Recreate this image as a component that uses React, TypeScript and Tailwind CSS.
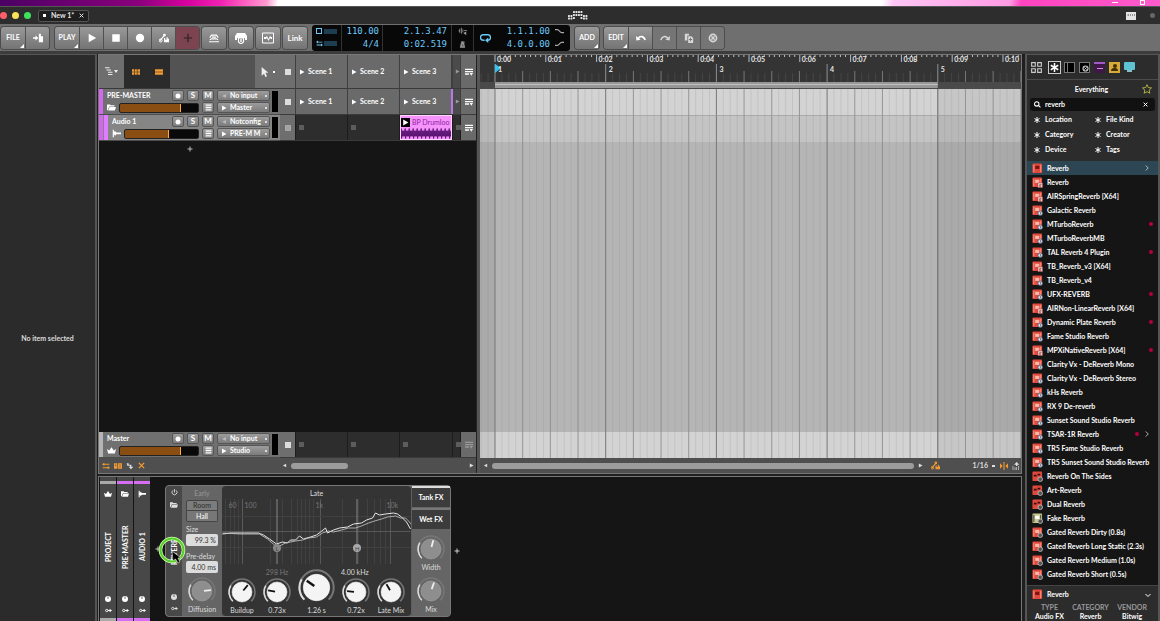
import type { ReactNode } from 'react';
import clsx from 'clsx';

const paths: Record<string, ReactNode> = {
  play: <path d="M2 1l9 5-9 5z" />,
  record: <circle cx="6" cy="6" r="5" />,
  stop: <path d="M1.500 1.500h9v9h-9z" />,
  left: <path d="M10 2v8L2 6z" />,
  right: <path d="M2 1v10l9-5z" />,
  toFile: (
    <>
      <path d="M0 5h3V3l3.500 3L3 9V7H0z" />
      <path d="M7 1h2.500v3H12v7H7z" />
    </>
  ),
  automation: (
    <>
      <path d="M1 9.500l5-6" fill="none" stroke="currentColor" strokeWidth="1.400" />
      <circle cx="6.500" cy="2.500" r="1.700" />
      <circle cx="2" cy="9" r="1.800" fill="none" stroke="currentColor" strokeWidth="1.200" />
      <path d="M6 6h1.500v2H9V5h1.500v2H12v4H6z" />
    </>
  ),
  plus: <path d="M5 1h2v4h4v2H7v4H5V7H1V5h4z" />,
  thinPlus: <path d="M5 1h2v4h4v2H7v4H5V7H1V5h4z" />,
  layers: (
    <path d="M0 10.500h12M1 8l2-1h6l2 1M1 5.500l2-3h6l2 3M3.500 5h5" fill="none" stroke="currentColor" strokeWidth="1.400" />
  ),
  groove: (
    <>
      <path d="M2 1h8l2 3v4h-2V6H2v2H0V4z" />
      <path d="M3.500 6h5v4L6 12 3.500 10z" fill="none" stroke="currentColor" strokeWidth="1.200" />
      <path d="M5.300 7h1.400v3H5.300z" />
    </>
  ),
  wave: (
    <>
      <path d="M.5 1h11v10H.5z" fill="none" stroke="currentColor" />
      <path d="M2 5h2l1-1 1.500 3L8 4l1 1h1v2H9L8 6 6.500 9 5 6 4 7H2z" />
    </>
  ),
  undo: (
    <>
      <path d="M2.500 6.500C5 3 9.500 3.500 11 8.500" fill="none" stroke="currentColor" strokeWidth="2" />
      <path d="M0 3.500L.5 9l5-1z" />
    </>
  ),
  redo: (
    <>
      <path d="M9.500 6.500C7 3 2.500 3.500 1 8.500" fill="none" stroke="currentColor" strokeWidth="1.700" />
      <path d="M12 3.500L11.500 9l-5-1z" />
    </>
  ),
  copy: (
    <>
      <path d="M1 1h5v2H4v6H1z" />
      <path fillRule="evenodd" d="M5 4h4l2 2v6H5zM7.300 5.800v1.500H6v1h1.300v1.500h1V8.300h1.400v-1H8.300V5.800z" />
    </>
  ),
  cancel: (
    <>
      <circle cx="6" cy="6" r="4.300" fill="none" stroke="currentColor" strokeWidth="2" />
      <path d="M4 4l4 4M8 4L4 8" stroke="currentColor" strokeWidth="1.600" />
    </>
  ),
  close: <path d="M1.500 1.500l9 9M10.500 1.500l-9 9" fill="none" stroke="currentColor" strokeWidth="2.400" />,
  folder: <path d="M0 2h4l1 1h5v1.500H3L1 9.500H0zM3.500 5.300H12L10.500 10h-9z" />,
  crown: <path d="M0 4l3 2 3-4.500L9 6l3-2-1.500 6h-9z" />,
  track: <path d="M1 1h1.500v3L4 2.500l2 2h6v2.500H6l-2 2-1.500-2V11H1z" />,
  menu: <path d="M1 1h10v2.200H1zM1 4.900h10v2.200H1zM1 8.800h10V11H1z" />,
  clipList: <path d="M0 1h12v2H0zM0 4.500h12v2H0zM0 8h6v2H0zM7 7.500h5L9.500 11.500z" />,
  tree: <path d="M0 1h6M2 4h6M4 7h6M4 10h6" fill="none" stroke="currentColor" strokeWidth="1.300" />,
  grid: <path fillRule="evenodd" d="M0 2h12v8H0zM3.300 2v8h1V2zM7.300 2v8h1V2zM0 5.500h12v1H0z" />,
  rows: <path d="M0 2h12v3.500H0zM0 6.500h12V10H0z" />,
  pointer: <path d="M2 0l8 7H6.500L8.500 11l-2 1-1.700-4L2 10.500z" />,
  loop: (
    <>
      <path d="M5 9H3.500a3 3 0 010-6h5a3 3 0 010 6H8" fill="none" stroke="currentColor" strokeWidth="1.500" />
      <path d="M9 6v6L5.500 9z" />
    </>
  ),
  swap: <path d="M0 3.500L3.500 1v1.800H11v1.500H3.500V6zM12 8.500L8.500 6v1.800H1v1.500h7.500V11z" />,
  boxes: <path fillRule="evenodd" d="M0 2h5v8H0zM1.500 4v1.500h2V4zM6 2h6v8H6zM7 4h4v1H7zM7 7h4v1H7z" />,
  hook: <path d="M1 2h3v2h4v3h3L7.500 11 4 7h2V5.500H2z" />,
  metronome: (
    <path fillRule="evenodd" d="M4.500 1h3L10 11H2zM6 4L4.500 9h4zM10 1L6 8" stroke="currentColor" />
  ),
  shuffle: <path d="M1 4h1V2h1v6H2V6H1zM4 1h1v8H4zM6 3h1v4H6zM8 4h4v1H8zM7 8l4-2v5z" />,
  curveDown: <path d="M0 3.500h3c3 0 3 4 6 4h3" fill="none" stroke="currentColor" strokeWidth="1.500" />,
  curveUp: <path d="M0 8.500h3c3 0 3-4 6-4h3" fill="none" stroke="currentColor" strokeWidth="1.500" />,
  power: <path d="M6 0v6M3 2.500a4.300 4.300 0 106 0" fill="none" stroke="currentColor" strokeWidth="1.500" />,
  miniKnob: <path fillRule="evenodd" d="M6 0a6 6 0 100 12A6 6 0 006 0zM5.200 1h1.600v5H5.200z" />,
  link: (
    <>
      <circle cx="3" cy="6" r="2" fill="none" stroke="currentColor" strokeWidth="1.600" />
      <path d="M5 5.200h3V3l4 3-4 3V6.800H5z" />
    </>
  ),
  asterisk: <path d="M6 0v12M1 3l10 6M11 3L1 9" fill="none" stroke="currentColor" strokeWidth="2" />,
  search: (
    <path d="M8 8l3 3M8.500 5a3.800 3.800 0 11-7.600 0 3.800 3.800 0 017.600 0z" fill="none" stroke="currentColor" strokeWidth="1.800" />
  ),
  star: (
    <path d="M6 .8l1.600 3.500 3.800.4-2.800 2.600.8 3.800L6 9.200l-3.400 1.900.8-3.800L.6 4.700l3.800-.4z" fill="none" stroke="currentColor" strokeWidth="1" />
  ),
  chevron: <path d="M3.500 1l5 5-5 5" fill="none" stroke="currentColor" strokeWidth="1.700" />,
  down: <path d="M1 4l5 5 5-5" fill="none" stroke="currentColor" strokeWidth="2" />,
  snap: <path d="M0 2l4 4-4 4zM12 2v8L8 6zM5.200 0h1.600v12H5.200z" />,
  arrowBars: <path d="M7 0l4 4H8v2H6V4H3zM1 6h1v6H1zM4 8h1v4H4zM6 8h1v4H6zM9 6h1v6H9z" />,
  tiles: (
    <path d="M.7.700h4v4h-4zM7.300.700h4v4h-4zM.7 7.300h4v4h-4zM7.300 7.300h4v4h-4z" fill="none" stroke="currentColor" strokeWidth="1.200" />
  ),
};

function Icon({ name, className = 'size-2' }: { name: string; className?: string }) {
  return (
    <svg viewBox="0 0 12 12" fill="currentColor" aria-hidden="true" className={clsx('shrink-0', className)}>
      {paths[name]}
    </svg>
  );
}

const toolGroups: { label: string; icon?: string; tone?: string; corner?: boolean }[][] = [
  [{ label: 'FILE', corner: true }, { label: 'Save to file', icon: 'toFile' }],
  [
    { label: 'PLAY', corner: true },
    { label: 'Play', icon: 'play' },
    { label: 'Stop', icon: 'stop' },
    { label: 'Record', icon: 'record' },
    { label: 'Automation', icon: 'automation' },
    { label: 'Overdub', icon: 'plus', tone: 'red' },
  ],
  [{ label: 'Layers', icon: 'layers' }],
  [{ label: 'Groove', icon: 'groove' }],
  [{ label: 'Fill', icon: 'wave' }],
  [{ label: 'Link' }],
];

const editGroups: typeof toolGroups = [
  [{ label: 'ADD', corner: true }],
  [
    { label: 'EDIT', corner: true },
    { label: 'Undo', icon: 'undo' },
    { label: 'Redo', icon: 'redo', tone: 'flat' },
    { label: 'Duplicate', icon: 'copy', tone: 'flat' },
    { label: 'Delete', icon: 'cancel', tone: 'flat' },
  ],
];

function ToolGroup({ items }: { items: (typeof toolGroups)[number] }) {
  return (
    <div className="flex h-[22px] overflow-hidden rounded-[3px] ring-1 ring-[#4c4c4c]">
      {items.map((item, i) => (
        <button
          key={item.label}
          aria-label={item.label}
          className={clsx(
            'relative flex w-[24px] items-center justify-center',
            item.label === 'Link' ? 'text-[8px]' : 'text-[7px]',
            i > 0 && 'border-l border-[#505050]',
            item.tone === 'red' && 'bg-[#7c4450] text-[#402a2e]',
            item.tone === 'flat' && 'bg-[#757575] text-[#d8d8d8]',
            !item.tone && 'bg-linear-to-b from-[#999] to-[#747474] text-white'
          )}
        >
          {item.icon ? (
            <Icon name={item.icon} className={item.icon === 'wave' || item.icon === 'groove' ? 'size-3' : 'size-[10px]'} />
          ) : (
            item.label
          )}
          {item.corner && <span className="absolute right-px bottom-px border-b-4 border-l-4 border-b-white border-l-transparent" />}
        </button>
      ))}
    </div>
  );
}

function TitleBar() {
  return (
    <>
      <div className="flex h-[6px] items-start justify-end gap-[22px] bg-[linear-gradient(100deg,#4b0064_0%,#8b007c_12%,#d6009d_16%,#ef20b0_19%,#ff5cc0_21%,#ff9ad0_23%,#fff_24%,#fff_76%,#ffc6f4_77%,#ff9be4_87%,#ff43bf_88%,#ff5ccc_100%)] pr-[15px]">
        <span className="mt-[2px] h-px w-[6px] bg-white" />
        <span className="size-[5px] border border-white" />
      </div>
      <header className="flex h-[18px] items-center border-t border-[#555] bg-[#2d2d2d] pr-[5px]">
        <div className="flex flex-1 items-center">
          <div className="flex gap-[5px]">
            <span className="size-[7px] rounded-full bg-[#ff5f69]" />
            <span className="size-[7px] rounded-full bg-[#f9e158]" />
            <span className="size-[7px] rounded-full bg-[#3fe25b]" />
          </div>
          <div className="ml-[7px] flex h-[12px] items-center gap-[5px] rounded-[2px] border border-[#555] bg-[#1e1e1e] px-1 text-[7px] text-[#e5e5e5]">
            <span className="size-[3px] bg-white" />
            <span className="whitespace-nowrap">New 1*</span>
            <button aria-label="Close project">
              <Icon name="close" className="size-[5px]" />
            </button>
          </div>
        </div>
        <svg viewBox="0 0 20 10" className="h-[10px] w-[20px]" fill="#e8e8e8" aria-hidden="true">
          {[
            [0, 4], [0, 6.5], [2.5, 4], [2.5, 6.5], [5, 0], [5, 3], [5, 6], [7.5, 0], [7.5, 3], [10, 0], [10, 3],
            [12.5, 0], [12.5, 3], [12.5, 6], [15, 4], [15, 6.5], [17.5, 4], [17.5, 6.5],
          ].map(([x, y]) => (
            <rect key={`${x}-${y}`} x={x} y={y} width="1.900" height="1.900" rx="0.500" />
          ))}
        </svg>
        <div className="flex flex-1 items-center justify-end">
          <svg viewBox="0 0 10 8" className="h-2 w-[10px]" aria-hidden="true">
            <path d="M0 0h10v8H0z" fill="#e4e4e4" />
            <path d="M1.500 3h1.500M4 3h1M6 3h1M8 3h1" stroke="#444" />
          </svg>
          <span className="ml-[14px] size-[5px] rounded-full bg-[#666]" />
        </div>
      </header>
    </>
  );
}

function Transport() {
  return (
    <div className="flex h-[30px] items-center border-b-3 border-[#3c3c3c] bg-[#6f6f6f] pl-px">
      <div className="flex gap-[3px]">
        {toolGroups.map((group, i) => (
          <div key={i} className={i === 1 ? 'ml-[3px]' : undefined}>
            <ToolGroup items={group} />
          </div>
        ))}
      </div>
      <div className="ml-[5px] flex h-[26px] rounded-[3px] bg-[#080808] font-['DejaVu_Sans_Mono',monospace] text-[9px]/[13px] font-normal text-[#6cc8f8]">
        <div className="flex w-[30px] flex-col justify-around border-r border-[#333] px-1 py-px">
          <div className="flex items-center justify-between">
            <span className="size-[6px] border border-[#6cc8f8]" />
            <span className="h-[5px] w-[13px] bg-[#1c3e50]" />
          </div>
          <div className="flex items-center justify-between">
            <Icon name="swap" className="size-[7px]" />
            <span className="h-[5px] w-[13px] bg-[#1c3e50]" />
          </div>
        </div>
        <div className="w-[41px] border-r border-[#333] pr-[3px] text-right">
          <div>110.00</div>
          <div>4/4</div>
        </div>
        <div className="w-[69px] border-r border-[#333] pr-1 text-right">
          <div>2.1.3.47</div>
          <div>0:02.519</div>
        </div>
        <div className="flex w-[22px] flex-col items-center justify-around border-r border-[#333] text-[#999]">
          <Icon name="shuffle" className="size-[9px]" />
          <Icon name="metronome" className="size-[7px]" />
        </div>
        <div className="flex w-[96px] items-center pl-[6px]">
          <Icon name="loop" className="size-[11px]" />
          <div className="ml-auto text-right">
            <div>1.1.1.00</div>
            <div>4.0.0.00</div>
          </div>
          <div className="mr-[6px] ml-[5px] flex flex-col gap-[3px] text-[#aaa]">
            <Icon name="curveDown" className="size-[9px]" />
            <Icon name="curveUp" className="size-[9px]" />
          </div>
        </div>
      </div>
      <div className="ml-[5px] flex gap-[5px]">
        {editGroups.map((group, i) => (
          <ToolGroup key={i} items={group} />
        ))}
      </div>
    </div>
  );
}

const chip = 'flex h-[11px] items-center justify-center rounded-[2px] border border-[#555] bg-linear-to-b from-[#9c9c9c] to-[#7c7c7c] text-white';

function Route({ track, kind, value }: { track: string; kind: 'input' | 'output'; value: string }) {
  return (
    <div className={clsx(chip, 'w-[53px]')}>
      <Icon name={kind === 'input' ? 'left' : 'right'} className={clsx('mx-[3px] size-[6px]', kind === 'input' && 'opacity-40')} />
      <select
        aria-label={`${track} ${kind}`}
        className="h-[9px] min-w-0 flex-1 appearance-none overflow-hidden bg-transparent text-[7px]/[9px] font-bold"
      >
        <option>{value}</option>
      </select>
      <span className="mr-[2px] size-[2px] bg-[#ddd]" />
    </div>
  );
}

interface TrackProps {
  name: string;
  icon: string;
  input: string;
  output: string;
  volume: number;
  nested?: boolean;
  master?: boolean;
}

function TrackHeader({ name, icon, input, output, volume, nested, master }: TrackProps) {
  return (
    <div className={clsx('flex h-[26px] w-[181px] border-b border-[#4d4d4d]', nested ? 'bg-[#858585]' : 'bg-[#707070]')}>
      <span className={clsx('w-[4px]', master ? 'bg-[#b5b5b5]' : 'bg-[#d268ee]')} />
      {nested && <span className="ml-px w-[4px] bg-[#e07cff]" />}
      <div className="flex min-w-0 flex-1 flex-col justify-between py-px pl-1">
        <div className="flex items-center text-[7px]/[11px] text-white">
          <span className="flex-1 whitespace-nowrap">{name}</span>
          <div className="flex gap-[3px] text-[8px]">
            <button aria-label={`${name} record arm`} className={clsx(chip, 'w-[12px]')}>
              <Icon name="record" className="size-[6px]" />
            </button>
            <button aria-label={`${name} solo`} className={clsx(chip, 'w-[12px]')}>S</button>
            <button aria-label={`${name} mute`} className={clsx(chip, 'w-[12px]')}>M</button>
            <Route track={name} kind="input" value={input} />
          </div>
        </div>
        <div className="flex items-center gap-[3px] text-white">
          <Icon name={icon} className="size-[9px]" />
          <input
            type="range"
            aria-label={`${name} volume`}
            defaultValue={volume}
            className="h-[10px] min-w-0 flex-1 appearance-none rounded-[2px] border border-[#222] [&::-webkit-slider-thumb]:h-[8px] [&::-webkit-slider-thumb]:w-px [&::-webkit-slider-thumb]:appearance-none [&::-webkit-slider-thumb]:bg-[#ffab40]"
            style={{ background: `linear-gradient(to right, #8a4d12 ${volume}%, #090909 ${volume}%)` }}
          />
          <button aria-label={`${name} menu`} className={clsx(chip, 'w-[12px]')}>
            <Icon name="menu" className="size-[7px]" />
          </button>
          <Route track={name} kind="output" value={output} />
        </div>
      </div>
      <span className="mx-[2px] my-[2px] w-[6px] bg-black" />
    </div>
  );
}

const scenes = ['Scene 1', 'Scene 2', 'Scene 3'];

function SceneCells({ tall }: { tall?: boolean }) {
  return (
    <div className={clsx('flex flex-1 bg-[#3f3f3f] text-[7px] text-white', tall ? 'h-[33px]' : 'h-[26px] border-b border-[#3a3a3a]')}>
      <button aria-label="Stop all" className="flex w-[15px] items-center justify-center bg-[#6e6e6e]">
        <span className="size-[6px] bg-[#ddd]" />
      </button>
      {scenes.map((scene) => (
        <button key={scene} className="ml-px flex w-[51px] items-center gap-[3px] bg-[#6a6a6a] pl-[3px] whitespace-nowrap">
          <Icon name="right" className="size-[6px]" />
          {scene}
        </button>
      ))}
      <span className={clsx('w-[2px]', !tall && 'bg-[#b878ea]')} />
      <span className="flex w-[7px] items-center justify-end overflow-hidden bg-[#4b4b4b] text-[#999]">
        <Icon name="right" className="size-[5px]" />
      </span>
      <button aria-label="Clips" className="ml-auto flex w-[15px] items-center justify-center bg-[#6a6a6a]">
        <Icon name="clipList" className="size-2" />
      </button>
    </div>
  );
}

function Slot({ className }: { className: string }) {
  return (
    <button aria-label="Empty slot" className={clsx('ml-px flex items-center bg-[#2d2d2d] pl-[3px]', className)}>
      <span className="size-[5px] shrink-0 bg-[#5c5c5c]" />
    </button>
  );
}

function ClipCells({ clip }: { clip?: string }) {
  return (
    <div className="flex h-[26px] flex-1 border-b border-[#3a3a3a] bg-[#1c1c1c]">
      <button aria-label="Stop track" className="flex w-[15px] items-center justify-center bg-[#6e6e6e]">
        <span className={clsx('size-[6px]', clip ? 'bg-[#a5a5a5]' : 'bg-[#ddd]')} />
      </button>
      <Slot className="w-[51px]" />
      <Slot className="w-[51px]" />
      {clip ? (
        <button className="ml-px flex w-[52px] flex-col border border-[#ffd5ff] bg-[#f794fb] text-[7px]/[10px] font-normal text-[#8f22a3]">
          <span className="flex h-[12px] w-full items-center gap-[2px] overflow-hidden">
            <span className="flex size-[9px] items-center justify-center bg-black text-white">
              <Icon name="play" className="size-[7px]" />
            </span>
            <span className="whitespace-nowrap">{clip}</span>
          </span>
          <svg viewBox="0 0 50 10" preserveAspectRatio="none" className="h-[11px] w-full" aria-hidden="true">
            <path
              d={`M0 5${Array.from({ length: 50 }, (_, i) => `L${i + 0.2} ${i % 4 === 0 ? 0.5 : 2.5}L${i + 0.6} ${i % 4 === 0 ? 9.5 : 7.5}`).join('')}L50 5`}
              fill="none"
              stroke="#5b1474"
              strokeWidth="0.900"
            />
          </svg>
        </button>
      ) : (
        <Slot className="w-[52px]" />
      )}
      <Slot className="w-[7px]" />
      <button aria-label="Clips" className={clsx('ml-auto flex w-[15px] items-center justify-center bg-[#6a6a6a]', clip ? 'text-white' : 'text-[#999]')}>
        <Icon name="clipList" className="size-2" />
      </button>
    </div>
  );
}

function Launcher() {
  return (
    <section className="flex w-[378px] shrink-0 flex-col border-r border-[#222] bg-[#151515]">
      <div className="flex h-[34px] border-b border-[#3a3a3a]">
        <div className="flex w-[181px] bg-[#535353] text-[#eee]">
          <button aria-label="Track list" className="flex w-[25px] items-center justify-center bg-[#6e6e6e]">
            <Icon name="tree" className="size-[9px]" />
            <span className="border-x-2 border-t-3 border-x-transparent" />
          </button>
          <div className="flex w-[46px] items-center justify-around bg-[#2b2b2b] text-[#f19a32]">
            <button aria-label="Clip launcher view">
              <Icon name="grid" />
            </button>
            <button aria-label="Arranger view">
              <Icon name="rows" />
            </button>
          </div>
          <button aria-label="Pointer tool" className="ml-auto flex w-[25px] items-center justify-center gap-[3px] bg-[#6e6e6e]">
            <Icon name="pointer" className="size-[10px]" />
            <span className="size-[2px] bg-white" />
          </button>
        </div>
        <SceneCells tall />
      </div>
      <div className="flex">
        <TrackHeader name="PRE-MASTER" icon="folder" input="No input" output="Master" volume={78} />
        <SceneCells />
      </div>
      <div className="flex">
        <TrackHeader name="Audio 1" icon="track" input="Notconfig" output="PRE-M M" volume={60} nested />
        <ClipCells clip="BP Drumloo" />
      </div>
      <button aria-label="Add track" className="flex h-[15px] w-[181px] items-center justify-center text-[#bbb]">
        <Icon name="thinPlus" className="size-[6px]" />
      </button>
      <div className="flex-1" />
      <div className="flex">
        <TrackHeader name="Master" icon="crown" input="No input" output="Studio" volume={78} master />
        <ClipCells />
      </div>
      <div className="flex h-[15px] items-center bg-[#4f4f4f] text-[#f19a32]">
        <div className="flex w-[181px] gap-[4px] pl-[3px]">
          <Icon name="swap" />
          <Icon name="boxes" />
          <Icon name="hook" className="size-2 text-[#ddd]" />
          <Icon name="close" className="size-[7px]" />
        </div>
        <div className="flex flex-1 items-center justify-between px-[2px] text-[#ddd]">
          <Icon name="left" className="size-[5px]" />
          <div className="mx-[4px] flex-1">
            <div className="h-[6px] w-[57px] rounded-full bg-[#9c9c9c]" />
          </div>
          <Icon name="right" className="size-[5px]" />
        </div>
      </div>
    </section>
  );
}

// timeline geometry, in pixels from the left edge of the arranger
const ORIGIN = 15;
const BAR = 110.7;
const SECOND = 50.8;
const BARS = [0, 1, 2, 3, 4];
const SIXTEENTHS = Array.from({ length: 240 }, (_, i) => i - 2);
const LOOP_END = ORIGIN + BAR * 4;

function Ruler() {
  return (
    <div className="relative h-[34px] overflow-hidden bg-[#343434] text-[7px]/[8px] text-[#e6e6e6]">
      <svg className="block size-full" aria-hidden="true">
        {Array.from({ length: 500 }, (_, i) => (
          <path key={i} d={`M${ORIGIN + (i * SECOND) / 10} 0v${i % 10 === 0 ? 7 : 2}`} stroke="#bbb" />
        ))}
        {SIXTEENTHS.map((i) => {
          const x = ORIGIN + (i * BAR) / 16;
          if (i % 16 === 0) return <path key={i} d={`M${x} 9v18`} stroke="#909090" />;
          if (i % 4 === 0) return <path key={i} d={`M${x} 16v11`} stroke="#777" />;
          return <path key={i} d={`M${x} 18v9`} stroke="#454545" />;
        })}
        <rect x="0" y="27" width="100%" height="7" fill="#4a4a4a" />
        <rect x={ORIGIN} y="27" width={BAR * 4} height="6" fill="#979797" />
        <path d={`M${ORIGIN} 29.500h${BAR * 4}`} stroke="#c0c0c0" />
        <path d={`M${ORIGIN} 9l6 4-6 5z`} fill="#35c4f0" />
      </svg>
      {Array.from({ length: 11 }, (_, i) => (
        <span key={i} className="absolute top-0 font-bold" style={{ left: ORIGIN + 2 + i * SECOND }}>
          0:{String(i).padStart(2, '0')}
        </span>
      ))}
      {BARS.map((i) => (
        <span key={i} className="absolute top-[10px]" style={{ left: ORIGIN + 3 + i * BAR }}>
          {i + 1}
        </span>
      ))}
    </div>
  );
}

function Arranger() {
  return (
    <section className="flex min-w-0 flex-1 flex-col border-l-3 border-[#555]">
      <Ruler />
      <div className="relative flex flex-1 flex-col overflow-hidden">
        <div className="h-[26px] bg-[#d3d3d3]" />
        <div className="h-[27px] bg-[#c4c4c4]" />
        <div className="flex-1 bg-[#b5b5b5]" />
        <div className="h-[26px] bg-[#d3d3d3]" />
        <svg className="absolute inset-0 size-full" aria-hidden="true">
          <rect width={ORIGIN} height="100%" fill="#000" opacity="0.060" />
          <rect x={LOOP_END} width="100%" height="100%" fill="#000" opacity="0.060" />
          {SIXTEENTHS.map((i) => {
            const x = ORIGIN + (i * BAR) / 16;
            return (
              <line
                key={i}
                x1={x}
                x2={x}
                y1="0"
                y2="100%"
                stroke={i === 64 ? '#666' : i % 16 === 0 ? '#777' : '#888'}
                opacity={i % 16 === 0 ? 1 : i % 4 === 0 ? 0.8 : 0.2}
              />
            );
          })}
          <path d="M0 26.500h3000" stroke="#999" opacity="0.600" />
        </svg>
      </div>
      <div className="flex h-[15px] items-center bg-[#4f4f4f] pr-px pl-[3px] text-[7px] text-[#ddd]">
        <Icon name="left" className="size-[5px]" />
        <span className="mx-[4px] h-[6px] flex-1 rounded-full bg-[#9c9c9c]" />
        <Icon name="right" className="size-[5px]" />
        <Icon name="automation" className="ml-2 size-[9px] text-[#f19a32]" />
        <div className="ml-[33px] flex items-center gap-[4px]">
          <span className="font-bold">1/16</span>
          <span className="h-[2px] w-[3px] bg-[#ddd]" />
          <Icon name="snap" className="ml-px size-2 text-[#f19a32]" />
          <Icon name="arrowBars" className="size-2" />
        </div>
      </div>
    </section>
  );
}

function Knob({ label, angle, size = 'size-[28px]', dim }: { label: string; angle: number; size?: string; dim?: boolean }) {
  return (
    <label className="flex flex-col items-center text-[7px]/[9px] font-normal whitespace-nowrap text-[#ddd]">
      <span className={clsx('relative', size)}>
        <svg viewBox="0 0 28 28" className="size-full" aria-hidden="true">
          <path d="M4.800 23.200a13 13 0 1118.400 0" fill="none" stroke="#777" strokeWidth="1.500" />
          <path d="M4.800 23.200a13 13 0 01-2-15.500" fill="none" stroke="#ddd" strokeWidth="1.500" />
          <circle cx="14" cy="14" r="10" fill={dim ? '#8e8e8e' : '#f4f4f4'} stroke={dim ? '#aaa' : '#fff'} strokeWidth="0.500" />
          <path d="M14 12V5" stroke={dim ? '#eee' : '#111'} strokeWidth="1.800" transform={`rotate(${angle} 14 14)`} />
        </svg>
        <input type="range" aria-label={label} className="absolute inset-0 size-full opacity-0" />
      </span>
      {label}
    </label>
  );
}

const chains = [
  { name: 'PROJECT', icon: 'crown', band: 'bg-[#aaa]' },
  { name: 'PRE-MASTER', icon: 'folder', band: 'bg-[#d76df2]' },
  { name: 'AUDIO 1', icon: 'track', band: 'bg-[#d76df2]' },
];

const verticalText = 'flex flex-1 items-center justify-center [writing-mode:vertical-rl] rotate-180 text-[7px] whitespace-nowrap';
const valueBox = 'block h-[12px] w-full rounded-[2px] bg-[#ddd] pr-[2px] text-right text-[#333]';

// x positions of the frequency grid, on a 188-wide plot
const gridLines = [3, 8, 12, 16, 20, 48, 60, 69, 75, 79, 83, 87, 91, 120, 136, 145, 152, 158, 163];

function ReverbDevice() {
  return (
    <div className="flex h-[132px] rounded-[4px] border border-[#777] bg-[#5f5f5f]">
      <div className="relative flex w-[16px] flex-col items-center gap-[5px] rounded-l-[4px] bg-[#484848] pt-[3px] pb-1 text-[#ddd]">
        <button aria-label="Toggle device" className="block">
          <Icon name="power" className="size-[7px]" />
        </button>
        <Icon name="folder" />
        <span className={clsx(verticalText, 'text-white')}>REVERB</span>
        <Icon name="miniKnob" className="size-[6px]" />
        <Icon name="link" className="size-[7px]" />
        <svg viewBox="0 0 28 28" className="absolute top-[50px] -left-[8px] size-[28px]" aria-hidden="true">
          <circle cx="14" cy="14" r="11.500" fill="none" stroke="#d5ffb0" strokeWidth="3.500" />
          <circle cx="14" cy="14" r="11.500" fill="none" stroke="#55ce2c" strokeWidth="2" />
          <path d="M14 15l1 10 2.500-2 2.500 4 2-1-2-4h3z" fill="#000" stroke="#ddd" strokeWidth="0.600" />
        </svg>
      </div>
      <div className="flex w-[40px] flex-col bg-[#656565] px-[4px] pt-[3px] text-[7px]/[9px] font-normal text-[#ddd]">
        <span className="text-center text-[#999]">Early</span>
        <div className="mt-[2px] flex flex-col">
          <button className="h-[11px] rounded-t-[2px] border border-[#444] bg-[#7c7c7c] text-[#2c2c2c]">Room</button>
          <button className="h-[11px] rounded-b-[2px] border border-t-0 border-[#444] bg-[#777] text-white">Hall</button>
        </div>
        <label className="mt-[3px]">
          Size
          <input defaultValue="99.3 %" className={valueBox} />
        </label>
        <label className="mt-[6px] whitespace-nowrap">
          Pre-delay
          <input defaultValue="4.00 ms" className={valueBox} />
        </label>
        <div className="mt-auto flex justify-center pb-[2px]">
          <Knob label="Diffusion" angle={85} dim />
        </div>
      </div>
      <div className="flex w-[189px] flex-col rounded-[4px] bg-[#343434] text-[7px]/[9px] font-normal text-[#ddd]">
        <h3 className="pt-[3px] text-center font-normal">Late</h3>
        <svg viewBox="0 0 188 68" className="h-[68px] w-full shrink-0" fill="none" aria-hidden="true">
          {gridLines.map((x) => (
            <path key={x} d={`M${x} 1v65`} stroke="#454545" strokeWidth="0.800" />
          ))}
          <path d="M20 1v65M98 1v65M168 1v65M0 33.500h188" stroke="#626262" strokeWidth="0.800" />
          <path d="M0 18.500h188M0 49.500h188" stroke="#414141" />
          <path d="M54.500 1v65M134.500 1v65" stroke="#888" />
          <text x="6" y="10" fontSize="7" fill="#777">60</text>
          <text x="22" y="10" fontSize="7" fill="#777">100</text>
          <text x="93" y="10" fontSize="7" fill="#777">1k</text>
          <text x="164" y="10" fontSize="7" fill="#777">10k</text>
          <path
            d="M0 36l8-1h14l14 0 5 2 6 4 7 5 6-2 5 1 3-3 5 0 4-4 4 3 7-2 6-2 4-3 5-4 2 5 6-3 6-2 8-1 6-3 8-1 5-3 6-2 3-5 4 2 6-1 8-1 4 1 4 3 5 5 4 7"
            stroke="#e6e6e6"
          />
          <path
            d="M0 35l18 1 19 0 8 5 7 6 5 1 6-3 10-2 7-1 6-2 8-1 6-4 6-2 5 1 8-2 7-2 7 0 6-2 7-3 6-2 7-2 6-2 8-1 5 2 5 0 3 3 5 6 3 16"
            stroke="#c9c9c9"
            strokeWidth="0.800"
          />
          <circle cx="54.500" cy="50" r="4" fill="#888" />
          <circle cx="134.500" cy="50" r="4" fill="#aaa" />
          <text x="53" y="52.500" fontSize="6" fill="#444">L</text>
          <text x="132.500" y="52.500" fontSize="6" fill="#444">H</text>
        </svg>
        <div className="mt-[2px] flex">
          <span className="w-[110px] text-center text-[#777]">298 Hz</span>
          <span className="pl-[9px]">4.00 kHz</span>
        </div>
        <div className="-mt-[8px] flex flex-1 items-end justify-between px-[6px] pb-[2px]">
          <Knob label="Buildup" angle={40} />
          <Knob label="0.73x" angle={-80} />
          <Knob label="1.26 s" angle={-55} size="size-[37px]" />
          <Knob label="0.72x" angle={-85} />
          <Knob label="Late Mix" angle={-30} />
        </div>
      </div>
      <div className="ml-px flex w-[38px] flex-col items-center justify-between rounded-r-[4px] bg-[#656565] pb-[2px] text-[7px] text-white">
        <div className="flex w-full flex-col gap-px">
          <button className="flex h-[21px] items-center justify-center border-t-2 border-[#ddd] bg-[#3c3c3c]">Tank FX</button>
          <button className="flex h-[21px] items-center justify-center border-t-2 border-[#777] bg-[#3c3c3c]">Wet FX</button>
        </div>
        <Knob label="Width" angle={15} dim />
        <Knob label="Mix" angle={20} dim />
      </div>
    </div>
  );
}

function DevicePanel() {
  return (
    <section className="flex h-[145px] shrink-0 border border-b-0 border-[#777] bg-[#151515] pl-px">
      <div className="flex">
        {chains.map((chain) => (
          <div key={chain.name} className="mr-px flex w-[16px] flex-col items-center bg-[#484848] text-white">
            <span className={clsx('mt-1 h-[3px] w-full', chain.band)} />
            <Icon name={chain.icon} className="mt-[6px] size-2" />
            <span className={verticalText}>{chain.name}</span>
            <Icon name="miniKnob" className="size-[6px]" />
            <Icon name="link" className="mt-[5px] size-[7px]" />
            <span className={clsx('mt-[4px] h-[3px] w-full', chain.band)} />
          </div>
        ))}
      </div>
      <div className="flex w-[14px] items-center justify-center text-[#ccc]">
        <Icon name="thinPlus" className="size-[6px]" />
      </div>
      <div className="pt-[8px]">
        <ReverbDevice />
      </div>
      <div className="flex w-[12px] items-center justify-center pt-[3px] text-[#ccc]">
        <Icon name="thinPlus" className="size-[6px]" />
      </div>
    </section>
  );
}

// kind: 3 / 2 are plug-in format badges, o / p / f are presets
const results: { name: string; kind: string; dot?: boolean; more?: boolean }[] = [
  { name: 'Reverb', kind: '', more: true },
  { name: 'Reverb', kind: '2' },
  { name: 'AIRSpringReverb [X64]', kind: '2' },
  { name: 'Galactic Reverb', kind: '3' },
  { name: 'MTurboReverb', kind: '3', dot: true },
  { name: 'MTurboReverbMB', kind: '3' },
  { name: 'TAL Reverb 4 Plugin', kind: '3', dot: true },
  { name: 'TB_Reverb_v3 [X64]', kind: '2' },
  { name: 'TB_Reverb_v4', kind: '3' },
  { name: 'UFX-REVERB', kind: '3', dot: true },
  { name: 'AIRNon-LinearReverb [X64]', kind: '2' },
  { name: 'Dynamic Plate Reverb', kind: '3', dot: true },
  { name: 'Fame Studio Reverb', kind: '3' },
  { name: 'MPXiNativeReverb [X64]', kind: '2', dot: true },
  { name: 'Clarity Vx - DeReverb Mono', kind: '3' },
  { name: 'Clarity Vx - DeReverb Stereo', kind: '3' },
  { name: 'kHs Reverb', kind: '3' },
  { name: 'RX 9 De-reverb', kind: '3' },
  { name: 'Sunset Sound Studio Reverb', kind: '3' },
  { name: 'TSAR-1R Reverb', kind: '3', dot: true, more: true },
  { name: 'TR5 Fame Studio Reverb', kind: '3' },
  { name: 'TR5 Sunset Sound Studio Reverb', kind: '3' },
  { name: 'Reverb On The Sides', kind: 'o' },
  { name: 'Art-Reverb', kind: 'o' },
  { name: 'Dual Reverb', kind: 'o' },
  { name: 'Fake Reverb', kind: 'f' },
  { name: 'Gated Reverb Dirty (0.8s)', kind: 'p' },
  { name: 'Gated Reverb Long Static (2.3s)', kind: 'p' },
  { name: 'Gated Reverb Medium (1.0s)', kind: 'p' },
  { name: 'Gated Reverb Short (0.5s)', kind: 'p' },
];

function DeviceIcon({ kind }: { kind: string }) {
  return (
    <svg viewBox="0 0 12 12" className="size-[11px] shrink-0" aria-hidden="true">
      <rect x="0.500" y="0.500" width="10.500" height="10.500" rx="1" fill={kind === 'f' ? '#c9c98c' : '#df4a3e'} />
      {kind === 'o' ? (
        <path d="M2 4h3v2H2zM6 3h3v2H6z" fill="#3a0b08" />
      ) : (
        <>
          <path d="M2 2v8M9.500 2v8" stroke={kind === 'f' ? '#333' : '#ff9b8a'} />
          <rect x="3.500" y="3" width="4.500" height="3.500" fill={kind === 'f' ? '#fff' : kind ? '#ffb8aa' : '#7c130f'} />
        </>
      )}
      {(kind === '3' || kind === 'o' || kind === 'p' || kind === 'f') && (
        <circle cx="9" cy="9" r="2.500" fill={kind === '3' ? '#dfe6f5' : '#555'} stroke={kind === '3' ? '#456' : '#ccc'} strokeWidth="0.800" />
      )}
      {kind === '3' && <path d="M8.500 8h1v2h-1" fill="none" stroke="#223" strokeWidth="0.600" />}
      {kind === '2' && (
        <>
          <rect x="6.500" y="6.500" width="5" height="5" fill="#eee" stroke="#a33" strokeWidth="0.600" />
          <path d="M8 8h2v1H8v1.300h2" fill="none" stroke="#a22" strokeWidth="0.700" />
        </>
      )}
    </svg>
  );
}

const filters = ['Location', 'File Kind', 'Category', 'Creator', 'Device', 'Tags'];

const info = [
  ['TYPE', 'Audio FX'],
  ['CATEGORY', 'Reverb'],
  ['VENDOR', 'Bitwig'],
];

function Browser() {
  return (
    <aside className="flex w-[135px] shrink-0 flex-col border-x-2 border-t border-[#555] bg-[#2c2c2c] text-[7px]/[9px] text-white">
      <div className="flex h-[25px] items-center gap-[4px] border-b border-[#4b4b4b] pl-[4px] text-[#ccc]">
        <button aria-label="All sources">
          <Icon name="tiles" className="size-[11px]" />
        </button>
        <button aria-label="Everything" className="ml-[2px] border border-[#ccc] bg-[#222] p-px text-white">
          <Icon name="asterisk" className="size-[9px]" />
        </button>
        <button aria-label="Devices" className="-ml-px flex size-[11px] border border-[#777] bg-black pl-[2px]">
          <span className="h-full w-px bg-[#777]" />
        </button>
        <button aria-label="Presets" className="flex size-[11px] items-end justify-end border border-[#777] bg-black">
          <Icon name="cancel" className="size-[7px]" />
        </button>
        <button aria-label="Samples" className="flex size-[11px] items-center justify-center border-t-2 border-[#a458c8] bg-[#401848] text-[#d68af0]">
          <span className="h-px w-[6px] bg-current" />
        </button>
        <button aria-label="User content" className="flex size-[11px] flex-col items-center justify-center bg-[#d9aa38]">
          <span className="size-[4px] rounded-full bg-[#443006]" />
          <span className="h-[3px] w-[7px] rounded-t-full bg-[#443006]" />
        </button>
        <button aria-label="This computer" className="flex w-[11px] flex-col items-center">
          <span className="h-[8px] w-full rounded-[1px] bg-[#5fc2d2]" />
          <span className="h-[2px] w-[5px] bg-[#8abfc8]" />
        </button>
      </div>
      <div className="flex h-[18px] items-center pr-[6px] pl-[14px]">
        <h2 className="flex-1 text-center font-bold">Everything</h2>
        <button aria-label="Favourites" className="text-[#c5c54a]">
          <Icon name="star" className="size-[10px]" />
        </button>
      </div>
      <div className="mx-[3px] flex h-[13px] items-center rounded-[3px] bg-[#111] pr-[7px] pl-1">
        <Icon name="search" className="size-[7px]" />
        <input aria-label="Search" defaultValue="reverb" className="ml-1 min-w-0 flex-1 bg-transparent font-bold" />
        <button aria-label="Clear search">
          <Icon name="close" className="size-[5px]" />
        </button>
      </div>
      <div className="grid grid-cols-2 py-px pr-[2px] pl-[7px]">
        {filters.map((filter) => (
          <button key={filter} className="flex h-[15px] items-center gap-[5px]">
            <Icon name="asterisk" className="size-[6px]" />
            {filter}
          </button>
        ))}
      </div>
      <ul className="mt-[3px] flex-1 bg-[#151515]">
        {results.map((result, i) => (
          <li key={i}>
            <button className={clsx('flex h-[14px] w-full items-center gap-[4px] pl-[5px]', i === 0 && 'bg-[#2c4654]')}>
              <DeviceIcon kind={result.kind} />
              <span className="whitespace-nowrap">{result.name}</span>
              <span className={clsx('ml-auto flex items-center gap-[5px] text-[#ccc]', result.more ? 'mr-[8px]' : 'mr-[5px]')}>
                {result.dot && <span className="size-1 rounded-full bg-[#b5003c]" />}
                {result.more && <Icon name="chevron" className="size-[6px]" />}
              </span>
            </button>
          </li>
        ))}
      </ul>
      <div className="h-[36px] border-t border-[#444] pt-[3px]">
        <div className="flex items-center gap-[4px] pr-[7px] pl-[5px]">
          <DeviceIcon kind="" />
          <span className="flex-1 font-bold">Reverb</span>
          <Icon name="down" className="size-[6px]" />
        </div>
        <dl className="mt-[3px] flex justify-between pr-[11px] pl-[8px] text-center">
          {info.map(([term, value]) => (
            <div key={term}>
              <dt className="text-[#999]">{term}</dt>
              <dd>{value}</dd>
            </div>
          ))}
        </dl>
      </div>
    </aside>
  );
}

export default function App() {
  return (
    <div className="flex h-screen flex-col overflow-hidden bg-[#1f1f1f] font-[Lato,sans-serif] font-bold text-white">
      <TitleBar />
      <Transport />
      <main className="flex min-h-0 flex-1">
        <aside className="flex w-[97px] shrink-0 items-center justify-center border-t border-r-2 border-[#555] bg-[#2b2b2b] text-[7px] text-[#ddd]">
          No item selected
        </aside>
        <div className="ml-px flex min-w-0 flex-1 flex-col gap-[2px] pr-[3px]">
          <div className="flex min-h-0 flex-1 border border-[#777] bg-[#333]">
            <Launcher />
            <Arranger />
          </div>
          <DevicePanel />
        </div>
        <Browser />
      </main>
    </div>
  );
}
